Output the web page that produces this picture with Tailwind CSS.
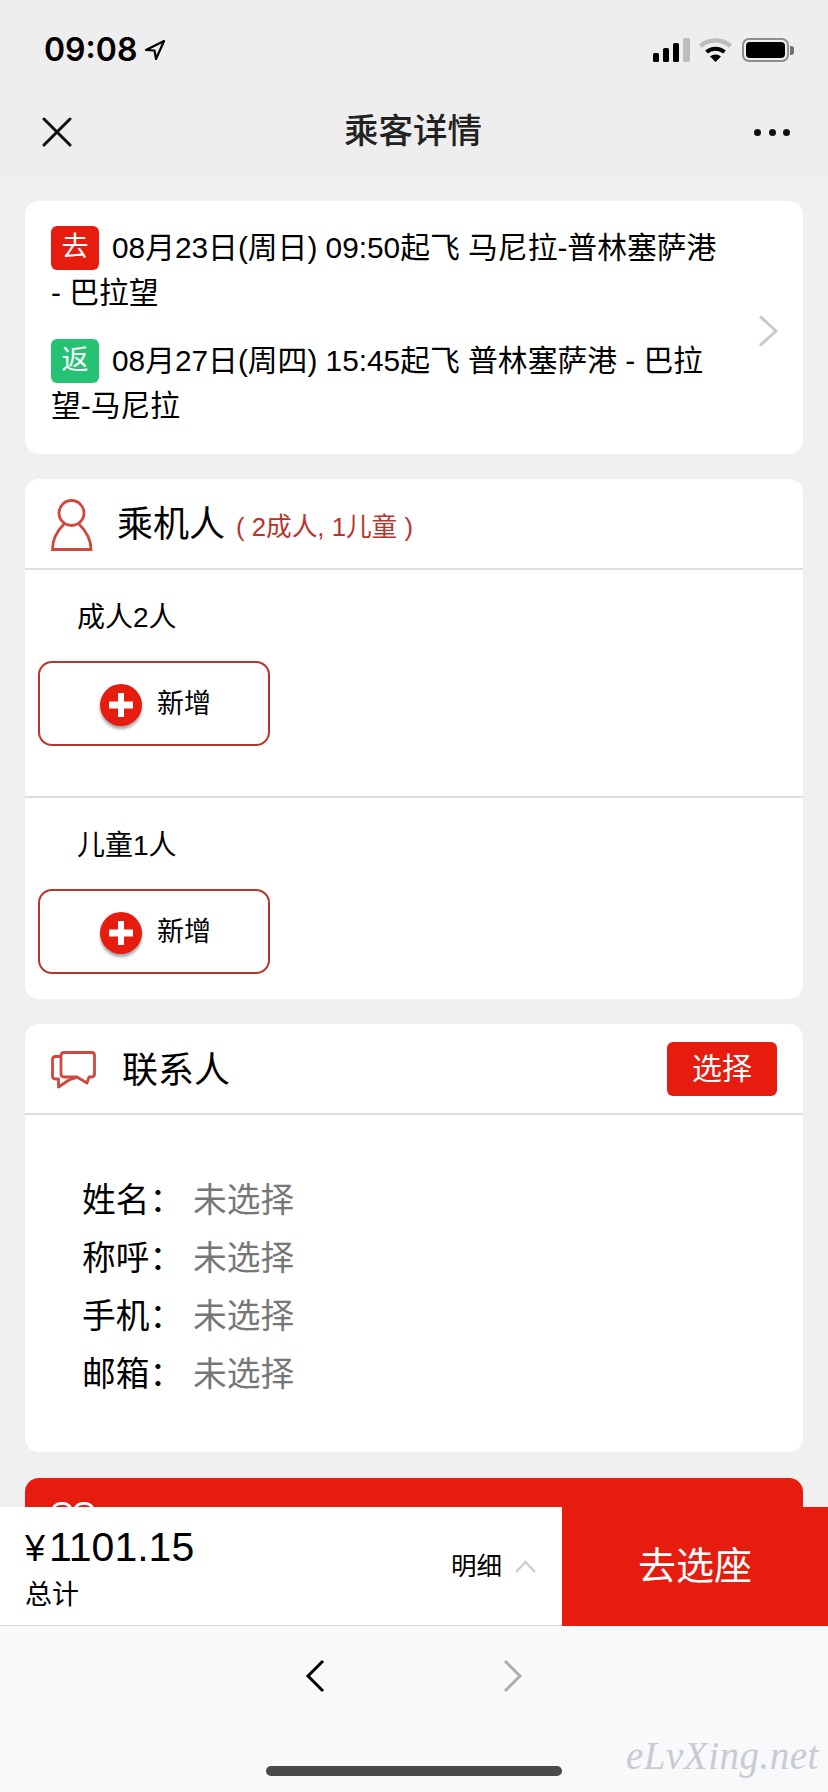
<!DOCTYPE html>
<html>
  <head>
    <meta charset="UTF-8">
    <title>乘客详情</title>
    <script src="https://cdn.jsdelivr.net/npm/@tailwindcss/browser@4"></script>
  </head>
  <body class="bg-[#f0f0f0]">
  <div class="relative w-[828px] h-[1792px] overflow-hidden bg-[#f0f0f0] text-black font-['Liberation_Sans','Noto_Sans_CJK_SC',sans-serif]">

    <!-- Status bar + nav -->
    <div class="h-[176px] bg-[#eeeeee]">
      <div class="h-[94px] pl-[44px] pr-[34px] pt-[30px] flex justify-between items-start">
        <div class="flex items-center gap-[7px] h-[40px]">
          <span class="text-[32px] leading-[40px] font-semibold font-['Inter',sans-serif]">09:08</span>
          <svg class="w-[22px] h-[22px]" viewBox="0 0 22 22" fill="none" stroke="black" stroke-width="2.2" stroke-linejoin="round"><path d="M20 2 L2 11 L10.5 11.5 L12 20 Z"/></svg>
        </div>
        <div class="flex items-center gap-[9px] h-[40px]">
          <!-- signal -->
          <svg class="w-[37px] h-[24px]" viewBox="0 0 37 24"><rect x="0" y="15" width="6" height="9" rx="1.5" fill="black"/><rect x="10" y="10" width="6" height="14" rx="1.5" fill="black"/><rect x="20" y="5" width="6" height="19" rx="1.5" fill="black"/><rect x="30" y="0" width="7" height="24" rx="1.5" fill="#bdbdbd"/></svg>
          <!-- wifi -->
          <svg class="w-[33px] h-[24px]" viewBox="0 0 33 24" fill="none"><path d="M1.5 8 C9.5 0.5 23.5 0.5 31.5 8" stroke="#bdbdbd" stroke-width="4.5"/><path d="M7.5 14 C12.5 9.5 20.5 9.5 25.5 14" stroke="black" stroke-width="4"/><path d="M16.5 24 L11 18.5 C14 15.8 19 15.8 22 18.5 Z" fill="black"/></svg>
          <!-- battery -->
          <div class="flex items-center ml-[1px]">
            <div class="w-[47px] h-[24px] rounded-[7px] border-2 border-[#8e8e8e] p-[2px]"><div class="w-full h-full rounded-[4px] bg-black"></div></div>
            <div class="w-[4px] h-[9px] ml-[1px] rounded-r-[3px] bg-[#6f6f6f]"></div>
          </div>
        </div>
      </div>
      <div class="h-[82px] pl-[42px] pr-[38px] pb-[6px] flex items-center justify-between">
        <svg class="w-[30px] h-[30px]" viewBox="0 0 30 30" fill="none" stroke="#111" stroke-width="3" stroke-linecap="round"><path d="M2 2 L28 28 M28 2 L2 28"/></svg>
        <div class="text-[34.5px] font-medium text-[#222]">乘客详情</div>
        <div class="flex gap-[7.5px]">
          <div class="w-[7px] h-[7px] rounded-full bg-[#111]"></div>
          <div class="w-[7px] h-[7px] rounded-full bg-[#111]"></div>
          <div class="w-[7px] h-[7px] rounded-full bg-[#111]"></div>
        </div>
      </div>
    </div>

    <div class="px-[25px] pt-[25px] flex flex-col gap-[25px]">

      <!-- Flights -->
      <div class="h-[253px] bg-white rounded-[14px] pl-[26px] pr-[25px] pt-[24px] flex items-center justify-between">
        <div class="self-start text-[29.8px] leading-[45px] whitespace-nowrap">
          <div class="flex items-center gap-[13px]"><span class="w-[48px] h-[44px] flex items-center justify-center rounded-[6px] bg-[#e61c0f] text-white text-[27px]">去</span><span>08月23日(周日) 09:50起飞 马尼拉-普林塞萨港</span></div>
          <div>- 巴拉望</div>
          <div class="mt-[23px] flex items-center gap-[13px]"><span class="w-[48px] h-[44px] flex items-center justify-center rounded-[6px] bg-[#25c274] text-white text-[27px]">返</span><span>08月27日(周四) 15:45起飞 普林塞萨港 - 巴拉</span></div>
          <div>望-马尼拉</div>
        </div>
        <svg class="w-[20px] h-[32px] mb-[18px]" viewBox="0 0 20 32" fill="none" stroke="#c9c9c9" stroke-width="3"><path d="M2 1.5 L18 16 L2 30.5"/></svg>
      </div>

      <!-- Passengers -->
      <div class="h-[520px] bg-white rounded-[14px] overflow-hidden">
        <div class="h-[91px] pl-[26px] pt-[3px] border-b-2 border-[#dedede] flex items-center">
          <svg class="w-[42px] h-[52px]" viewBox="0 0 42 52" fill="none" stroke="#d0473d" stroke-width="2.8"><circle cx="20.5" cy="14" r="12.5"/><path d="M13 25 C7 31 1.5 39 1.5 50.5 L40 50.5 C40 39 34 31 28 25"/></svg>
          <span class="ml-[24px] text-[36px]">乘机人</span>
          <span class="ml-[11px] mt-[4px] text-[25.7px] text-[#b8352d]">( 2成人, 1儿童 )</span>
        </div>
        <div class="h-[228px] pl-[13px] border-b-2 border-[#dedede]">
          <div class="pl-[39px] pt-[28px] text-[28px] leading-[40px]">成人2人</div>
          <div class="mt-[23px] w-[232px] h-[85px] rounded-[14px] border-2 border-[#b8352d] flex items-center justify-center gap-[15px] pl-[3px] pt-[2px]">
            <div class="w-[42px] h-[42px] rounded-full bg-[#e61c0f] shadow-[0_3px_3px_rgba(0,0,0,0.35)] flex items-center justify-center">
              <svg class="w-[26px] h-[26px]" viewBox="0 0 26 26" fill="white"><path d="M10 1.5 Q10 1 10.5 1 H15.5 Q16 1 16 1.5 V9.5 H24.5 Q25 9.5 25 10 V16 Q25 16.5 24.5 16.5 H16 V24.5 Q16 25 15.5 25 H10.5 Q10 25 10 24.5 V16.5 H1.5 Q1 16.5 1 16 V10 Q1 9.5 1.5 9.5 H10 Z"/></svg>
            </div>
            <span class="text-[27px]">新增</span>
          </div>
        </div>
        <div class="pl-[13px]">
          <div class="pl-[39px] pt-[28px] text-[28px] leading-[40px]">儿童1人</div>
          <div class="mt-[23px] w-[232px] h-[85px] rounded-[14px] border-2 border-[#b8352d] flex items-center justify-center gap-[15px] pl-[3px] pt-[2px]">
            <div class="w-[42px] h-[42px] rounded-full bg-[#e61c0f] shadow-[0_3px_3px_rgba(0,0,0,0.35)] flex items-center justify-center">
              <svg class="w-[26px] h-[26px]" viewBox="0 0 26 26" fill="white"><path d="M10 1.5 Q10 1 10.5 1 H15.5 Q16 1 16 1.5 V9.5 H24.5 Q25 9.5 25 10 V16 Q25 16.5 24.5 16.5 H16 V24.5 Q16 25 15.5 25 H10.5 Q10 25 10 24.5 V16.5 H1.5 Q1 16.5 1 16 V10 Q1 9.5 1.5 9.5 H10 Z"/></svg>
            </div>
            <span class="text-[27px]">新增</span>
          </div>
        </div>
      </div>

      <!-- Contact -->
      <div class="h-[428px] bg-white rounded-[14px] overflow-hidden">
        <div class="h-[91px] pl-[26px] pr-[26px] border-b-2 border-[#dedede] flex items-center">
          <svg class="w-[45px] h-[38px] mt-[2px]" viewBox="0 0 45 38" fill="none" stroke="#d0473d" stroke-width="2.8" stroke-linejoin="round"><path d="M10 5.5 H4.5 Q1.5 5.5 1.5 8.5 V25 Q1.5 28 4.5 28 H7.5 V36 L18 29 L27 26"/><path d="M13 1.5 H40.5 Q43.5 1.5 43.5 4.5 V23 Q43.5 26 40.5 26 H38 L36 32 L26 26 H13 Q10 26 10 23 V4.5 Q10 1.5 13 1.5 Z"/></svg>
          <span class="ml-[26px] mt-[4px] text-[36px]">联系人</span>
          <div class="ml-auto w-[110px] h-[54px] rounded-[6px] bg-[#e61c0f] text-white text-[30px] flex items-center justify-center">选择</div>
        </div>
        <div class="pl-[57px] pt-[56px] text-[33.7px] leading-[58px]">
          <div class="flex"><span class="w-[111px]">姓名：</span><span class="text-[#777777]">未选择</span></div>
          <div class="flex"><span class="w-[111px]">称呼：</span><span class="text-[#777777]">未选择</span></div>
          <div class="flex"><span class="w-[111px]">手机：</span><span class="text-[#777777]">未选择</span></div>
          <div class="flex"><span class="w-[111px]">邮箱：</span><span class="text-[#777777]">未选择</span></div>
        </div>
      </div>

      <!-- Red card, mostly under the bottom bar -->
      <div class="h-[200px] mt-[1px] pl-[26px] pt-[24px] bg-[#e61c0f] rounded-t-[14px]">
        <svg class="w-[44px] h-[40px]" viewBox="0 0 44 40" fill="none" stroke="white" stroke-width="2.8"><rect x="1.5" y="1.5" width="19" height="30" rx="8"/><rect x="23.5" y="1.5" width="19" height="30" rx="8"/></svg>
      </div>
    </div>

    <!-- Bottom order bar -->
    <div class="absolute left-0 right-0 top-[1507px] h-[119px] flex bg-white border-b border-[#dddddd]">
      <div class="w-[562px] pl-[25px] pr-[26px] flex items-center justify-between">
        <div class="pt-[4px]">
          <div class="leading-[46px] whitespace-nowrap"><span class="text-[36px] mr-[4px]">¥</span><span class="text-[41px]">1101.15</span></div>
          <div class="mt-[-2px] text-[27px] leading-[36px]">总计</div>
        </div>
        <div class="flex items-center gap-[13px]">
          <span class="text-[25.5px]">明细</span>
          <svg class="w-[21px] h-[13px]" viewBox="0 0 21 13" fill="none" stroke="#cccccc" stroke-width="2.4"><path d="M1 12 L10.5 2 L20 12"/></svg>
        </div>
      </div>
      <div class="flex-1 mb-[-1px] bg-[#e61c0f] text-white text-[38px] flex items-center justify-center">去选座</div>
    </div>

    <!-- Browser toolbar -->
    <div class="absolute left-0 right-0 bottom-0 h-[166px] bg-[#f8f9fb]">
      <div class="pt-[33px] pl-[305px] flex gap-[178px]">
        <svg class="w-[20px] h-[34px]" viewBox="0 0 20 34" fill="none" stroke="#000" stroke-width="3"><path d="M18 2 L3 17 L18 32"/></svg>
        <svg class="w-[20px] h-[34px]" viewBox="0 0 20 34" fill="none" stroke="#adadad" stroke-width="3"><path d="M2 2 L17 17 L2 32"/></svg>
      </div>
      <div class="absolute left-[266px] bottom-[16px] w-[296px] h-[10px] rounded-full bg-[#4a4a4a]"></div>
      <div class="absolute left-[626px] bottom-[16px] text-[39px] leading-[40px] italic text-[#c9cbd0] tracking-[0.5px] font-['Liberation_Serif',serif]">eLvXing.net</div>
    </div>
  </div>
  </body>
</html>
